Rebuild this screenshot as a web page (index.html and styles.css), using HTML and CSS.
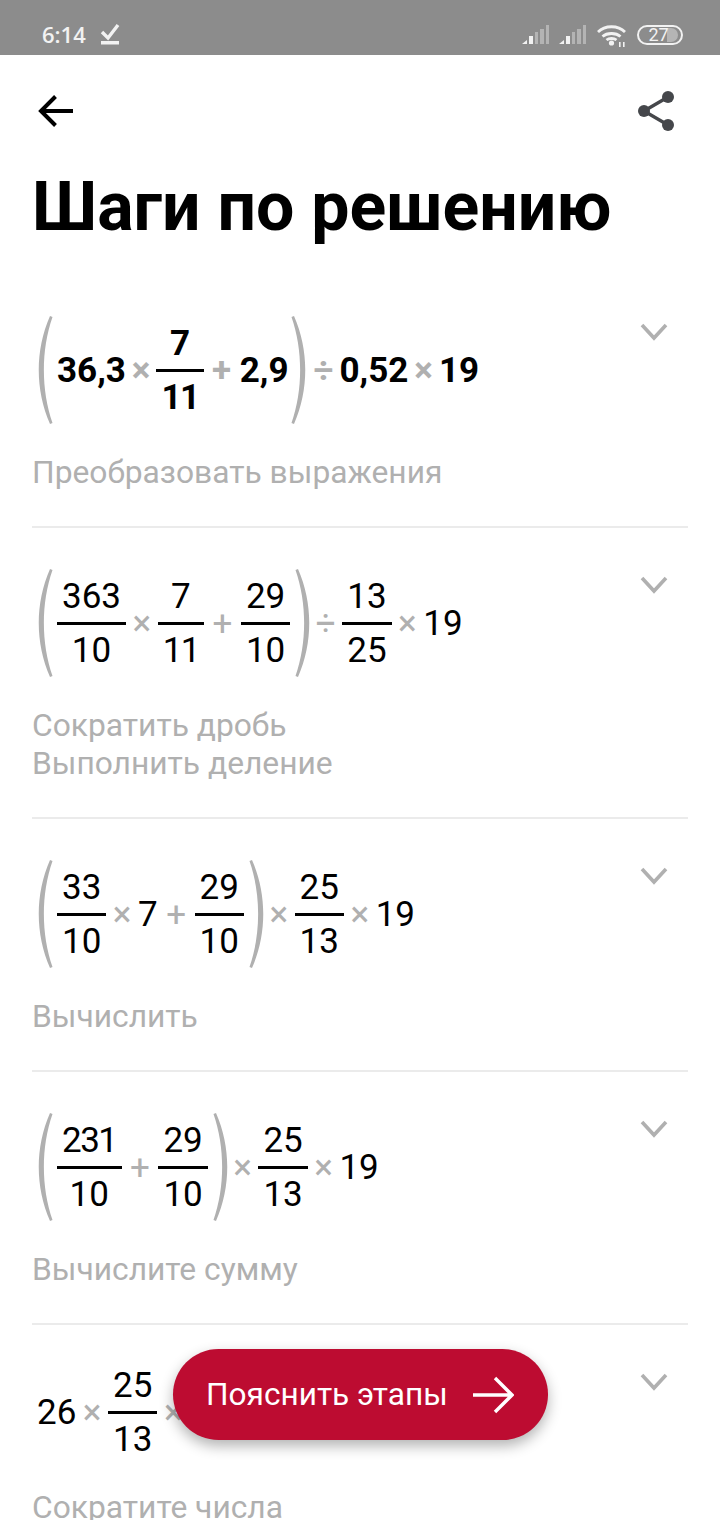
FILE: index.html
```html
<!DOCTYPE html>
<html lang="ru">
<head>
    <meta charset="UTF-8">
    <title>Шаги по решению</title>
    <link rel="stylesheet" href="styles.css">
</head>
<body>
<svg class="defs" width="0" height="0">
    <symbol id="paren-l" viewBox="0 0 17 110"><path d="M13 1 L15.5 2 C4 35 4 75 15.5 108 L13 109 C-2 75 -2 35 13 1 Z" fill="#b0b0b0"/></symbol>
    <symbol id="paren-r" viewBox="0 0 17 110"><path d="M4 1 L1.5 2 C13 35 13 75 1.5 108 L4 109 C19 75 19 35 4 1 Z" fill="#b0b0b0"/></symbol>
    <symbol id="chev" viewBox="0 0 28 18"><path d="M2 2 L14 15 L26 2" fill="none" stroke="#b0b0b0" stroke-width="3.6"/></symbol>
    <symbol id="signal" viewBox="0 0 29 22"><g fill="#f2f2f2"><path d="M1 21 L6 17 V21 Z"/><rect x="8" y="13" width="4" height="8"/></g><g fill="#b4b4b4"><rect x="14" y="9" width="3" height="12"/><rect x="19" y="6" width="4" height="15"/><rect x="25" y="2" width="3" height="19"/></g></symbol>
</svg>
<div class="screen">
    <div class="status">
        <div class="status-left">
            <span class="time">6:14</span>
            <svg width="20" height="22" viewBox="0 0 20 22"><path d="M2 9 L8 15 L18 2" fill="none" stroke="#f2f2f2" stroke-width="3.4"/><rect x="1" y="18" width="18" height="3.5" fill="#f2f2f2"/></svg>
        </div>
        <div class="status-right">
            <svg class="signal" width="29" height="22"><use href="#signal"/></svg>
            <svg class="signal" width="29" height="22"><use href="#signal"/></svg>
            <svg width="32" height="24" viewBox="0 0 32 24"><g fill="none" stroke="#f2f2f2" stroke-width="2.8"><path d="M3 9 C10 2 23 2 30 9"/><path d="M7.5 13.5 C12 9.5 21 9.5 25.5 13.5"/><path d="M11.5 17 C14 15 19 15 21.5 17"/></g><circle cx="16.5" cy="20" r="2.6" fill="#f2f2f2"/><g fill="#f2f2f2"><rect x="24" y="19" width="1.6" height="5"/><rect x="28" y="19" width="1.6" height="5"/></g></svg>
            <div class="battery"><div class="battery-fill"></div><span class="battery-num">27</span></div>
        </div>
    </div>

    <div class="toolbar">
        <svg width="36" height="32" viewBox="0 0 36 32"><path d="M35 16 H4 M17.5 1.5 L3 16 L17.5 30.5" fill="none" stroke="#000" stroke-width="4"/></svg>
        <svg class="share" width="40" height="42" viewBox="0 0 40 42"><path d="M32 6 L8 20 L32 34" fill="none" stroke="#45474b" stroke-width="3.4"/><circle cx="32" cy="6" r="6" fill="#45474b"/><circle cx="8" cy="20" r="6" fill="#45474b"/><circle cx="32" cy="34" r="6" fill="#45474b"/></svg>
    </div>

    <h1 class="title">Шаги по решению</h1>

    <div class="step">
        <div class="expr bold">
            <svg class="paren"><use href="#paren-l"/></svg>
            <span>36,3</span><span class="op">×</span>
            <div class="frac"><span class="num">7</span><span class="den tight">11</span></div>
            <span class="op plus">+</span><span>2,9</span>
            <svg class="paren close"><use href="#paren-r"/></svg>
            <span class="op">÷</span><span>0,52</span><span class="op">×</span><span>19</span>
        </div>
        <p class="caption">Преобразовать выражения</p>
        <svg class="chevron" width="28" height="18"><use href="#chev"/></svg>
    </div>

    <div class="step">
        <div class="expr">
            <svg class="paren"><use href="#paren-l"/></svg>
            <div class="frac"><span class="num">363</span><span class="den">10</span></div>
            <span class="op">×</span>
            <div class="frac"><span class="num">7</span><span class="den tight">11</span></div>
            <span class="op plus">+</span>
            <div class="frac"><span class="num">29</span><span class="den">10</span></div>
            <svg class="paren close"><use href="#paren-r"/></svg>
            <span class="op">÷</span>
            <div class="frac"><span class="num">13</span><span class="den">25</span></div>
            <span class="op">×</span><span>19</span>
        </div>
        <p class="caption">Сократить дробь<br>Выполнить деление</p>
        <svg class="chevron" width="28" height="18"><use href="#chev"/></svg>
    </div>

    <div class="step">
        <div class="expr">
            <svg class="paren"><use href="#paren-l"/></svg>
            <div class="frac"><span class="num">33</span><span class="den">10</span></div>
            <span class="op">×</span><span>7</span><span class="op plus">+</span>
            <div class="frac"><span class="num">29</span><span class="den">10</span></div>
            <svg class="paren close"><use href="#paren-r"/></svg>
            <span class="op">×</span>
            <div class="frac"><span class="num">25</span><span class="den">13</span></div>
            <span class="op">×</span><span>19</span>
        </div>
        <p class="caption">Вычислить</p>
        <svg class="chevron" width="28" height="18"><use href="#chev"/></svg>
    </div>

    <div class="step">
        <div class="expr">
            <svg class="paren"><use href="#paren-l"/></svg>
            <div class="frac"><span class="num tight-num">231</span><span class="den">10</span></div>
            <span class="op plus">+</span>
            <div class="frac"><span class="num">29</span><span class="den">10</span></div>
            <svg class="paren close"><use href="#paren-r"/></svg>
            <span class="op">×</span>
            <div class="frac"><span class="num">25</span><span class="den">13</span></div>
            <span class="op">×</span><span>19</span>
        </div>
        <p class="caption">Вычислите сумму</p>
        <svg class="chevron" width="28" height="18"><use href="#chev"/></svg>
    </div>

    <div class="step last">
        <div class="expr short">
            <span>26</span><span class="op">×</span>
            <div class="frac"><span class="num">25</span><span class="den">13</span></div>
            <span class="op">×</span>
        </div>
        <p class="caption">Сократите числа</p>
        <svg class="chevron" width="28" height="18"><use href="#chev"/></svg>
    </div>

    <div class="fab">
        <span>Пояснить этапы</span>
        <svg width="42" height="38" viewBox="0 0 42 38"><path d="M1 19 H39 M23 2 L40 19 L23 36" fill="none" stroke="#fff" stroke-width="3.4"/></svg>
    </div>
</div>
</body>
</html>
```

FILE: styles.css
```css
*{
    margin: 0;
    padding: 0;
    box-sizing: border-box;
}
body{
    font-family: Roboto, "Noto Sans", sans-serif;
    background: #fff;
    color: #000;
}
.defs{
    position: absolute;
}
.screen{
    width: 720px;
    height: 1520px;
    position: relative;
    overflow: hidden;
}

/* status bar */
.status{
    height: 55px;
    background: #8c8c8c;
    padding: 21px 37px 0 42px;
    display: flex;
    justify-content: space-between;
    align-items: flex-start;
    color: #f2f2f2;
}
.status-left{
    display: flex;
    align-items: center;
    gap: 14px;
}
.time{
    font-family: "Open Sans", sans-serif;
    font-weight: 600;
    font-size: 22px;
    line-height: 26px;
}
.status-right{
    display: flex;
    align-items: center;
    gap: 8px;
    margin-top: 2px;
}
.signal{
    margin-top: -2px;
}
.battery{
    width: 46px;
    height: 20px;
    margin-left: 2px;
    border: 2px solid #f2f2f2;
    border-radius: 10px;
    position: relative;
    overflow: hidden;
    text-align: center;
}
.battery-fill{
    position: absolute;
    left: 28px;
    top: 1px;
    bottom: 1px;
    width: 11px;
    background: #b5b5b5;
    border-radius: 0 7px 7px 0;
}
.battery-num{
    position: relative;
    font-size: 18px;
    line-height: 16px;
    display: block;
    padding-right: 3px;
}

/* header */
.toolbar{
    padding: 40px 44px 0 38px;
    height: 112px;
    display: flex;
    justify-content: space-between;
    align-items: flex-start;
}
.share{
    margin-top: -4px;
}
.title{
    font-size: 68px;
    font-weight: 700;
    line-height: 80px;
    padding-left: 32px;
    margin-bottom: 28px;
}

/* steps */
.step{
    margin: 0 32px;
    padding: 40px 0 34px;
    border-bottom: 2px solid #ebebeb;
    position: relative;
}
.step.last{
    border-bottom: none;
}
.expr{
    height: 110px;
    padding-left: 5px;
    display: flex;
    align-items: center;
    font-size: 35px;
}
.expr.short{
    height: 95px;
}
.expr.bold{
    font-weight: 700;
}
.paren{
    width: 17px;
    height: 110px;
    flex-shrink: 0;
    margin: 0 3px 0 0;
}
.paren.close{
    margin: 0 -2px 0 4px;
}
.bold .paren.close{
    margin: 0 0 0 2px;
}
.op{
    color: #b0b0b0;
    margin: 0 6.5px;
}
.op.plus{
    margin: 0 8.5px;
}
.bold .op{
    margin: 0 6px;
}
.bold .op.plus{
    margin: 0 8.5px;
}
.frac{
    display: flex;
    flex-direction: column;
    align-items: center;
}
.num{
    line-height: 50px;
    align-self: stretch;
    text-align: center;
    border-bottom: 3px solid #000;
    padding: 2px 5px 0;
}
.num.tight-num{
    letter-spacing: -1.5px;
}
.den{
    line-height: 52px;
    padding: 0 5px;
}
.den.tight{
    letter-spacing: -1.5px;
}
.caption{
    margin-top: 29px;
    font-size: 31.75px;
    line-height: 38px;
    color: #b0b0b0;
}
.chevron{
    position: absolute;
    right: 20px;
    top: 48px;
}

/* floating button */
.fab{
    position: absolute;
    left: 173px;
    top: 1349px;
    width: 375px;
    height: 91px;
    border-radius: 46px;
    background: #bd0c31;
    color: #fff;
    font-size: 31.6px;
    padding: 0 34px 0 33px;
    display: flex;
    align-items: center;
    justify-content: space-between;
    box-shadow: 0 6px 14px rgba(0,0,0,0.3);
}
```
